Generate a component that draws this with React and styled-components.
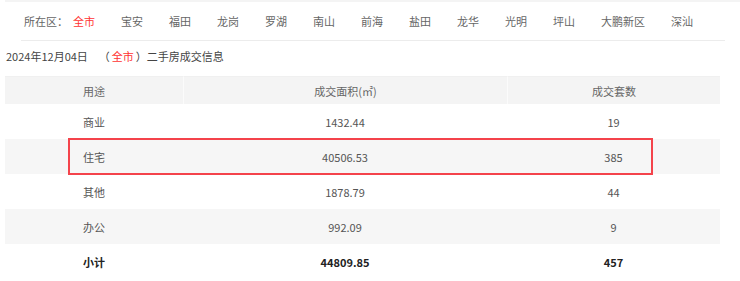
import React from "react";
import styled, { createGlobalStyle } from "styled-components";

const GlobalStyle = createGlobalStyle`
  body {
    margin: 0;
    background: #fff;
    font-family: "Noto Sans CJK SC", "Noto Sans", sans-serif;
  }
`;

const districts = ["全市", "宝安", "福田", "龙岗", "罗湖", "南山", "前海", "盐田", "龙华", "光明", "坪山", "大鹏新区", "深汕"];

const rows = [
  { use: "商业", area: "1432.44", count: "19" },
  { use: "住宅", area: "40506.53", count: "385" },
  { use: "其他", area: "1878.79", count: "44" },
  { use: "办公", area: "992.09", count: "9" },
];

const Page = styled.div`
  width: 740px;
  height: 281px;
  overflow: hidden;
`;

const TopStrip = styled.div`
  height: 2px;
  margin-left: 5px;
  background: #f4f4f4;
`;

const FilterBar = styled.div`
  display: flex;
  align-items: center;
  height: 38px;
  margin: 0 15px 0 21px;
  padding-left: 3px;
  border-bottom: 1px solid #ececec;
  font-size: 11px;
  color: #666;
`;

const FilterLabel = styled.span`
  margin-right: 5px;
`;

const District = styled.span`
  margin-right: 26px;
  color: ${(p) => (p.$active ? "#f33" : "#666")};
  white-space: nowrap;
`;

const Title = styled.div`
  display: flex;
  align-items: center;
  height: 30px;
  padding-left: 6px;
  font-size: 11px;
  color: #444;
`;

const Paren = styled.span`
  margin-left: 11px;
`;

const Red = styled.span`
  color: #f33;
  margin: 0 2px;
`;

const TableWrap = styled.div`
  position: relative;
  width: 715px;
  margin: 5px 0 0 5px;
`;

const Table = styled.div`
  display: grid;
  grid-template-columns: 178px 324px 213px;
  font-size: 11px;
  color: #555;
`;

const HeadCell = styled.div`
  height: 28px;
  display: flex;
  align-items: center;
  justify-content: center;
  background: #f4f4f4;
  border-top: 1px solid #f0f0f0;
  box-sizing: border-box;
  border-left: ${(p) => (p.$first ? "none" : "1px solid #fbfbfb")};
  color: #666;
`;

const Cell = styled.div`
  height: 35px;
  display: flex;
  align-items: center;
  justify-content: center;
  background: ${(p) => (p.$striped ? "#f6f6f6" : "#fff")};
  font-weight: ${(p) => (p.$bold ? 700 : 400)};
  color: ${(p) => (p.$bold ? "#222" : "#555")};
`;

const Highlight = styled.div`
  position: absolute;
  left: 63px;
  top: 62px;
  width: 585px;
  height: 37px;
  box-sizing: border-box;
  border: 2px solid #f4434b;
  pointer-events: none;
`;

export default function App() {
  return (
    <Page>
      <GlobalStyle />
      <TopStrip />
      <FilterBar>
        <FilterLabel>所在区：</FilterLabel>
        {districts.map((d, i) => (
          <District key={d} $active={i === 0}>
            {d}
          </District>
        ))}
      </FilterBar>
      <Title>
        2024年12月04日
        <Paren>
          （<Red>全市</Red>）二手房成交信息
        </Paren>
      </Title>
      <TableWrap>
        <Table>
          <HeadCell $first>用途</HeadCell>
          <HeadCell>成交面积(㎡)</HeadCell>
          <HeadCell>成交套数</HeadCell>
          {rows.map((r, i) => (
            <React.Fragment key={r.use}>
              <Cell $striped={i % 2 === 1}>{r.use}</Cell>
              <Cell $striped={i % 2 === 1}>{r.area}</Cell>
              <Cell $striped={i % 2 === 1}>{r.count}</Cell>
            </React.Fragment>
          ))}
          <Cell $bold>小计</Cell>
          <Cell $bold>44809.85</Cell>
          <Cell $bold>457</Cell>
        </Table>
        <Highlight />
      </TableWrap>
    </Page>
  );
}
